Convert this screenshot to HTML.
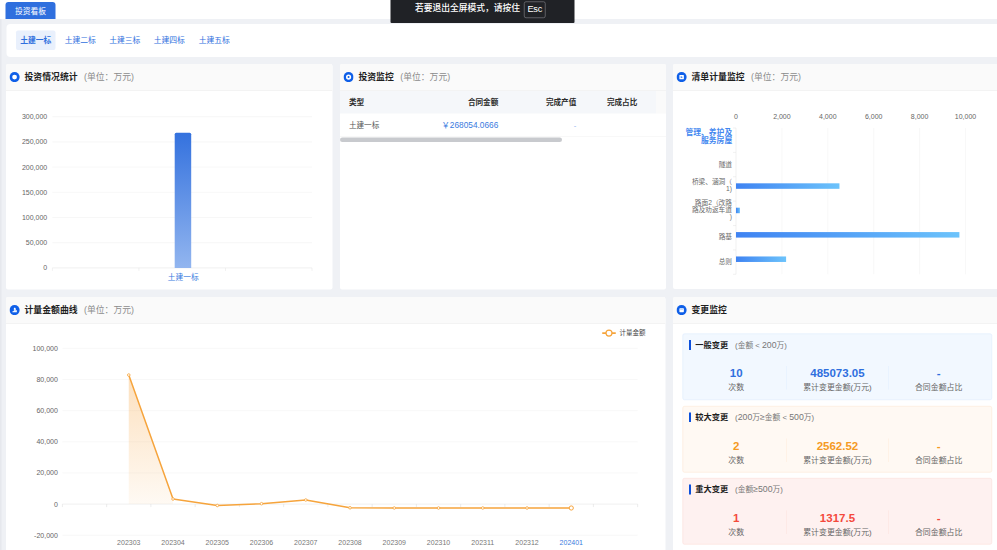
<!DOCTYPE html>
<html lang="zh-CN"><head><meta charset="utf-8"><title>投资看板</title>
<style>
html,body{margin:0;padding:0;width:997px;height:550px;overflow:hidden;background:#eff1f5;}
#root{position:absolute;left:0;top:0;width:1994px;height:1100px;transform:scale(.5);transform-origin:0 0;
 font-family:"Liberation Sans","Noto Sans CJK SC",sans-serif;color:#222;background:#eff1f5;overflow:hidden;}
#root *{box-sizing:border-box;}
.abs{position:absolute;}
.card{position:absolute;background:#fff;border-radius:4px;overflow:hidden;}
.chead{position:absolute;left:0;top:0;right:0;height:54px;background:#fafafa;border-bottom:1px solid #ececec;}
.ctitle{position:absolute;left:37px;top:0;height:54px;line-height:53.4px;font-size:17.7px;font-weight:700;color:#1f1f1f;white-space:nowrap;}
.ctitle span{font-weight:400;color:#8c8c8c;font-size:17.6px;margin-left:13px;}
.ico{position:absolute;left:7.4px;top:15.8px;width:20.3px;height:20.3px;}
.tab{position:absolute;top:13.5px;height:39px;width:79px;line-height:39px;text-align:center;font-size:15.6px;color:#2f6fde;border-radius:4px;white-space:nowrap;}
.tab.on{background:#e9f0fc;font-weight:700;}
svg text{font-family:"Liberation Sans","Noto Sans CJK SC",sans-serif;}
.box{position:absolute;left:19px;width:619px;height:133px;border-radius:4px;border:1px solid;}
.box .bar{position:absolute;left:12px;top:12px;width:4px;height:19.5px;background:#0c50dc;}
.box .bt{position:absolute;left:24.6px;top:8px;height:27px;line-height:27px;font-size:16.4px;font-weight:700;color:#1f1f1f;white-space:nowrap;}
.box .bt>span{font-weight:400;color:#777;font-size:15.5px;margin-left:14px;}
.n{font-size:1.13em;}
.col{position:absolute;top:63px;width:203px;text-align:center;}
.col b{display:block;font-size:23px;line-height:30px;font-weight:700;}
.col i{display:block;font-style:normal;font-size:15.8px;line-height:28px;color:#666;white-space:nowrap;}
.vd{position:absolute;top:64px;width:1px;height:47px;opacity:.7;}
</style></head><body><div id="root">

<div class="abs" style="left:0;top:0;width:1994px;height:38px;background:#fff"></div>
<div class="abs" style="left:11px;top:4px;width:100px;height:34px;background:#2f6fde;border-radius:6px 6px 0 0;color:#fff;font-size:15.6px;line-height:35px;text-align:center;white-space:nowrap;">投资看板</div>
<div class="abs" style="left:781px;top:-6px;width:368px;height:51.6px;background:#202226;border-radius:2px;"></div>
<div class="abs" style="left:830px;top:0;height:41px;line-height:32px;font-size:17.5px;font-weight:500;color:#fff;white-space:nowrap;">若要退出全屏模式，请按住</div>
<div class="abs" style="left:1048px;top:3px;width:43px;height:33px;border:1.5px solid #9a9ba0;border-radius:4px;color:#fff;font-size:18.4px;line-height:27px;letter-spacing:-0.4px;text-align:center;">Esc</div>
<div class="abs" style="left:13px;top:47.5px;width:1990px;height:66px;background:#fff;border-radius:8px;">
<div class="tab on" style="left:19px">土建一标</div>
<div class="tab" style="left:108px">土建二标</div>
<div class="tab" style="left:197px">土建三标</div>
<div class="tab" style="left:286px">土建四标</div>
<div class="tab" style="left:376px">土建五标</div>
</div>
<div class="card" style="left:12px;top:127.8px;width:652.6px;height:451.6px">
<div class="chead"><svg class="ico" viewBox="0 0 20 20"><circle cx="10" cy="10" r="10" fill="#0f5fe8"/><circle cx="10" cy="10" r="4.7" fill="#fff"/></svg><div class="ctitle">投资情况统计<span>(单位：万元)</span></div></div>
<svg class="abs" style="left:0;top:55px" width="654" height="398" viewBox="0 0 654 398"><defs><linearGradient id="g1" x1="0" y1="0" x2="0" y2="1"><stop offset="0" stop-color="#3472de"/><stop offset="1" stop-color="#92b5ef"/></linearGradient></defs><line x1="92.8" y1="352.8" x2="612" y2="352.8" stroke="#e2e2e2" stroke-width="1"/><text x="82.4" y="357.8" text-anchor="end" font-size="14" fill="#666">0</text><line x1="92.8" y1="302.4" x2="612" y2="302.4" stroke="#efefef" stroke-width="1"/><text x="82.4" y="307.4" text-anchor="end" font-size="14" fill="#666">50,000</text><line x1="92.8" y1="252" x2="612" y2="252" stroke="#efefef" stroke-width="1"/><text x="82.4" y="257" text-anchor="end" font-size="14" fill="#666">100,000</text><line x1="92.8" y1="201.6" x2="612" y2="201.6" stroke="#efefef" stroke-width="1"/><text x="82.4" y="206.6" text-anchor="end" font-size="14" fill="#666">150,000</text><line x1="92.8" y1="151.2" x2="612" y2="151.2" stroke="#efefef" stroke-width="1"/><text x="82.4" y="156.2" text-anchor="end" font-size="14" fill="#666">200,000</text><line x1="92.8" y1="100.8" x2="612" y2="100.8" stroke="#efefef" stroke-width="1"/><text x="82.4" y="105.8" text-anchor="end" font-size="14" fill="#666">250,000</text><line x1="92.8" y1="50.4" x2="612" y2="50.4" stroke="#efefef" stroke-width="1"/><text x="82.4" y="55.4" text-anchor="end" font-size="14" fill="#666">300,000</text><line x1="92.8" y1="352.8" x2="92.8" y2="358.8" stroke="#e2e2e2" stroke-width="1"/><line x1="265.8" y1="352.8" x2="265.8" y2="358.8" stroke="#e2e2e2" stroke-width="1"/><line x1="439" y1="352.8" x2="439" y2="358.8" stroke="#e2e2e2" stroke-width="1"/><line x1="612" y1="352.8" x2="612" y2="358.8" stroke="#e2e2e2" stroke-width="1"/><path d="M337.4 352.802 v-267.2 q0 -3 3 -3 h27 q3 0 3 3 v267.2 z" fill="url(#g1)"/><text x="354.4" y="376.2" text-anchor="middle" font-size="15.4" fill="#3a7be0">土建一标</text></svg>
</div>
<div class="card" style="left:679.8px;top:127.8px;width:652.6px;height:451.6px">
<div class="chead"><svg class="ico" viewBox="0 0 20 20"><circle cx="10" cy="10" r="10" fill="#0f5fe8"/><circle cx="10" cy="10" r="5.1" fill="#fff"/><circle cx="10" cy="10" r="2" fill="#0f5fe8"/></svg><div class="ctitle">投资监控<span>(单位：万元)</span></div></div>
<div class="abs" style="left:0;top:54px;width:632px;height:45.4px;background:#f5f7fa;"></div><div class="abs" style="left:632px;top:54px;width:22px;height:45.4px;background:#fafafa;"></div><div style="position:absolute;top:54px;height:45px;line-height:45px;font-size:15.2px;font-weight:700;color:#2b2b2b;white-space:nowrap;left:18px">类型</div><div style="position:absolute;top:54px;height:45px;line-height:45px;font-size:15.2px;font-weight:700;color:#2b2b2b;white-space:nowrap;right:335.8px">合同金额</div><div style="position:absolute;top:54px;height:45px;line-height:45px;font-size:15.2px;font-weight:700;color:#2b2b2b;white-space:nowrap;right:179.8px">完成产值</div><div style="position:absolute;top:54px;height:45px;line-height:45px;font-size:15.2px;font-weight:700;color:#2b2b2b;white-space:nowrap;right:57.8px">完成占比</div><div style="position:absolute;top:100px;height:46px;line-height:46px;font-size:15.2px;white-space:nowrap;left:18px;color:#555">土建一标</div><div style="position:absolute;top:100px;height:46px;line-height:46px;font-size:15.2px;white-space:nowrap;right:335.8px;color:#3a7be0;font-size:16.6px">￥268054.0666</div><div style="position:absolute;top:100px;height:46px;line-height:46px;font-size:15.2px;white-space:nowrap;right:179.8px;color:#8fb3ee">-</div><div class="abs" style="left:0;top:145px;width:654px;height:1px;background:#f1f1f1"></div><div class="abs" style="left:0;top:147px;width:444px;height:9px;background:#c8cace;border-radius:5px"></div>
</div>
<div class="card" style="left:1346px;top:127.8px;width:652.6px;height:450.4px">
<div class="chead"><svg class="ico" viewBox="0 0 20 20"><circle cx="10" cy="10" r="10" fill="#0f5fe8"/><rect x="5.7" y="5.9" width="8.8" height="8.4" rx="1.2" fill="#fff"/><path d="M8.2 8 L11.6 9.4 L11.6 11.6 L8.2 11.6 Z" fill="#4f8df0"/></svg><div class="ctitle">清单计量监控<span>(单位：万元)</span></div></div>
<svg class="abs" style="left:0;top:55px" width="654" height="398" viewBox="0 0 654 398"><defs><linearGradient id="g3" x1="0" y1="0" x2="1" y2="0"><stop offset="0" stop-color="#3f83f2"/><stop offset="1" stop-color="#6cc3fb"/></linearGradient></defs><line x1="126" y1="73" x2="126" y2="365.6" stroke="#e2e2e2" stroke-width="1"/><text x="126" y="54" text-anchor="middle" font-size="14" fill="#666">0</text><line x1="217.8" y1="73" x2="217.8" y2="365.6" stroke="#f0f0f0" stroke-width="1"/><text x="217.8" y="54" text-anchor="middle" font-size="14" fill="#666">2,000</text><line x1="309.6" y1="73" x2="309.6" y2="365.6" stroke="#f0f0f0" stroke-width="1"/><text x="309.6" y="54" text-anchor="middle" font-size="14" fill="#666">4,000</text><line x1="401.4" y1="73" x2="401.4" y2="365.6" stroke="#f0f0f0" stroke-width="1"/><text x="401.4" y="54" text-anchor="middle" font-size="14" fill="#666">6,000</text><line x1="493.2" y1="73" x2="493.2" y2="365.6" stroke="#f0f0f0" stroke-width="1"/><text x="493.2" y="54" text-anchor="middle" font-size="14" fill="#666">8,000</text><line x1="585" y1="73" x2="585" y2="365.6" stroke="#f0f0f0" stroke-width="1"/><text x="585" y="54" text-anchor="middle" font-size="14" fill="#666">10,000</text><line x1="120" y1="73" x2="126" y2="73" stroke="#e2e2e2" stroke-width="1"/><line x1="120" y1="121.767" x2="126" y2="121.767" stroke="#e2e2e2" stroke-width="1"/><line x1="120" y1="170.533" x2="126" y2="170.533" stroke="#e2e2e2" stroke-width="1"/><line x1="120" y1="219.3" x2="126" y2="219.3" stroke="#e2e2e2" stroke-width="1"/><line x1="120" y1="268.067" x2="126" y2="268.067" stroke="#e2e2e2" stroke-width="1"/><line x1="120" y1="316.833" x2="126" y2="316.833" stroke="#e2e2e2" stroke-width="1"/><line x1="120" y1="365.6" x2="126" y2="365.6" stroke="#e2e2e2" stroke-width="1"/><rect x="126" y="183.633" width="206.9" height="11" fill="url(#g3)"/><rect x="126" y="232.4" width="7.8" height="11" fill="url(#g3)"/><rect x="126" y="281.167" width="446.8" height="11" fill="url(#g3)"/><rect x="126" y="329.933" width="100.2" height="11" fill="url(#g3)"/><text x="118.4" y="86.3" text-anchor="end" font-size="15.6" font-weight="700" fill="#4287f0">管理、养护及</text><text x="118.4" y="102.3" text-anchor="end" font-size="15.6" font-weight="700" fill="#4287f0">服务房屋</text><text x="118" y="150.2" text-anchor="end" font-size="13.4" fill="#6a6a6a">隧道</text><text x="118" y="184.8" text-anchor="end" font-size="13.4" fill="#6a6a6a">桥梁、涵洞（</text><text x="118" y="198.8" text-anchor="end" font-size="13.4" fill="#6a6a6a">1)</text><text x="118" y="226.8" text-anchor="end" font-size="13.4" fill="#6a6a6a">路面2（改路</text><text x="118" y="240.8" text-anchor="end" font-size="13.4" fill="#6a6a6a">路及劝返车道</text><text x="118" y="254.8" text-anchor="end" font-size="13.4" fill="#6a6a6a">)</text><text x="118" y="295.6" text-anchor="end" font-size="13.4" fill="#6a6a6a">路基</text><text x="118" y="344.2" text-anchor="end" font-size="13.4" fill="#6a6a6a">总则</text></svg>
</div>
<div class="card" style="left:12px;top:593.8px;width:1318.6px;height:520px">
<div class="chead"><svg class="ico" viewBox="0 0 20 20"><circle cx="10" cy="10" r="10" fill="#0f5fe8"/><path d="M5.6 14.4 L5.6 12.6 L8.6 11.8 L8.6 6.6 Q8.6 5.6 9.6 5.6 L11 5.6 Q12 5.6 12 6.6 L12.4 9.2 L14.4 11 L14.4 14.4 Z" fill="#fff"/><path d="M10.6 7.6 L11.5 12.2 L10.5 12.2 Z" fill="#0f5fe8"/></svg><div class="ctitle">计量金额曲线<span>(单位：万元)</span></div></div>
<svg class="abs" style="left:0;top:55px" width="1318.6" height="460" viewBox="0 0 1318.6 460"><defs><linearGradient id="g4" x1="0" y1="0" x2="0" y2="1"><stop offset="0" stop-color="#f7a440" stop-opacity=".34"/><stop offset="1" stop-color="#f7a440" stop-opacity=".06"/></linearGradient></defs><line x1="112.8" y1="421.5" x2="1263.3" y2="421.5" stroke="#f0f0f0" stroke-width="1" /><text x="103.6" y="426.5" text-anchor="end" font-size="14" fill="#666">-20,000</text><line x1="112.8" y1="359.2" x2="1263.3" y2="359.2" stroke="#e0e0e0" stroke-width="1" /><text x="103.6" y="364.2" text-anchor="end" font-size="14" fill="#666">0</text><line x1="112.8" y1="296.9" x2="1263.3" y2="296.9" stroke="#f0f0f0" stroke-width="1" /><text x="103.6" y="301.9" text-anchor="end" font-size="14" fill="#666">20,000</text><line x1="112.8" y1="234.6" x2="1263.3" y2="234.6" stroke="#f0f0f0" stroke-width="1" /><text x="103.6" y="239.6" text-anchor="end" font-size="14" fill="#666">40,000</text><line x1="112.8" y1="172.3" x2="1263.3" y2="172.3" stroke="#f0f0f0" stroke-width="1" /><text x="103.6" y="177.3" text-anchor="end" font-size="14" fill="#666">60,000</text><line x1="112.8" y1="110" x2="1263.3" y2="110" stroke="#f0f0f0" stroke-width="1" /><text x="103.6" y="115" text-anchor="end" font-size="14" fill="#666">80,000</text><line x1="112.8" y1="47.7" x2="1263.3" y2="47.7" stroke="#f0f0f0" stroke-width="1" /><text x="103.6" y="52.7" text-anchor="end" font-size="14" fill="#666">100,000</text><line x1="112.8" y1="359.2" x2="112.8" y2="365.2" stroke="#d8d8d8" stroke-width="1"/><line x1="201.3" y1="359.2" x2="201.3" y2="365.2" stroke="#d8d8d8" stroke-width="1"/><line x1="289.8" y1="359.2" x2="289.8" y2="365.2" stroke="#d8d8d8" stroke-width="1"/><line x1="378.3" y1="359.2" x2="378.3" y2="365.2" stroke="#d8d8d8" stroke-width="1"/><line x1="466.8" y1="359.2" x2="466.8" y2="365.2" stroke="#d8d8d8" stroke-width="1"/><line x1="555.3" y1="359.2" x2="555.3" y2="365.2" stroke="#d8d8d8" stroke-width="1"/><line x1="643.8" y1="359.2" x2="643.8" y2="365.2" stroke="#d8d8d8" stroke-width="1"/><line x1="732.3" y1="359.2" x2="732.3" y2="365.2" stroke="#d8d8d8" stroke-width="1"/><line x1="820.8" y1="359.2" x2="820.8" y2="365.2" stroke="#d8d8d8" stroke-width="1"/><line x1="909.3" y1="359.2" x2="909.3" y2="365.2" stroke="#d8d8d8" stroke-width="1"/><line x1="997.8" y1="359.2" x2="997.8" y2="365.2" stroke="#d8d8d8" stroke-width="1"/><line x1="1086.3" y1="359.2" x2="1086.3" y2="365.2" stroke="#d8d8d8" stroke-width="1"/><line x1="1174.8" y1="359.2" x2="1174.8" y2="365.2" stroke="#d8d8d8" stroke-width="1"/><line x1="1263.3" y1="359.2" x2="1263.3" y2="365.2" stroke="#d8d8d8" stroke-width="1"/><text x="245.55" y="440.8" text-anchor="middle" font-size="14" fill="#777">202303</text><text x="334.05" y="440.8" text-anchor="middle" font-size="14" fill="#777">202304</text><text x="422.55" y="440.8" text-anchor="middle" font-size="14" fill="#777">202305</text><text x="511.05" y="440.8" text-anchor="middle" font-size="14" fill="#777">202306</text><text x="599.55" y="440.8" text-anchor="middle" font-size="14" fill="#777">202307</text><text x="688.05" y="440.8" text-anchor="middle" font-size="14" fill="#777">202308</text><text x="776.55" y="440.8" text-anchor="middle" font-size="14" fill="#777">202309</text><text x="865.05" y="440.8" text-anchor="middle" font-size="14" fill="#777">202310</text><text x="953.55" y="440.8" text-anchor="middle" font-size="14" fill="#777">202311</text><text x="1042.05" y="440.8" text-anchor="middle" font-size="14" fill="#777">202312</text><text x="1130.55" y="440.8" text-anchor="middle" font-size="14" fill="#3a7be0">202401</text><path d="M245.55 101 L334.05 349 L334.05 359.2 L245.55 359.2 Z" fill="url(#g4)"/><polyline fill="none" stroke="#f6a43c" stroke-width="3" stroke-linejoin="round" points="245.55,101 334.05,349 422.55,362 511.05,358.4 599.55,351 688.05,366.6 776.55,367 865.05,367 953.55,367 1042.05,367 1130.55,367"/><circle cx="245.55" cy="101" r="2.6" fill="#fff" stroke="#f6a43c" stroke-width="1.6"/><circle cx="334.05" cy="349" r="2.6" fill="#fff" stroke="#f6a43c" stroke-width="1.6"/><circle cx="422.55" cy="362" r="2.6" fill="#fff" stroke="#f6a43c" stroke-width="1.6"/><circle cx="511.05" cy="358.4" r="2.6" fill="#fff" stroke="#f6a43c" stroke-width="1.6"/><circle cx="599.55" cy="351" r="2.6" fill="#fff" stroke="#f6a43c" stroke-width="1.6"/><circle cx="688.05" cy="366.6" r="2.6" fill="#fff" stroke="#f6a43c" stroke-width="1.6"/><circle cx="776.55" cy="367" r="2.6" fill="#fff" stroke="#f6a43c" stroke-width="1.6"/><circle cx="865.05" cy="367" r="2.6" fill="#fff" stroke="#f6a43c" stroke-width="1.6"/><circle cx="953.55" cy="367" r="2.6" fill="#fff" stroke="#f6a43c" stroke-width="1.6"/><circle cx="1042.05" cy="367" r="2.6" fill="#fff" stroke="#f6a43c" stroke-width="1.6"/><circle cx="1130.55" cy="367" r="4.2" fill="#fff" stroke="#f6a43c" stroke-width="2"/><line x1="1192.5" y1="17.2" x2="1219.5" y2="17.2" stroke="#f6a43c" stroke-width="3.4"/><circle cx="1206" cy="17.2" r="6" fill="#fff" stroke="#f6a43c" stroke-width="2.4"/><text x="1227.2" y="22" font-size="13" fill="#444">计量金额</text></svg>
</div>
<div class="card" style="left:1346px;top:593.8px;width:652.6px;height:520px">
<div class="chead"><svg class="ico" viewBox="0 0 20 20"><circle cx="10" cy="10" r="10" fill="#0f5fe8"/><rect x="5.7" y="6.2" width="8.8" height="8" rx="1.2" fill="#fff"/><rect x="7.2" y="7.4" width="5.8" height="2.6" fill="#c6d9fa"/></svg><div class="ctitle">变更监控</div></div>
<div class="box" style="top:73.4px;background:#f2f8ff;border-color:#d9e9fd"><div class="bar"></div><div class="bt">一般变更<span>(金额 &lt; <span class="n">200</span>万)</span></div><div class="col" style="left:5px"><b style="color:#2f6fde">10</b><i>次数</i></div><div class="col" style="left:207.4px"><b style="color:#2f6fde">485073.05</b><i>累计变更金额(万元)</i></div><div class="col" style="left:409.8px"><b style="color:#2f6fde">-</b><i>合同金额占比</i></div><div class="vd" style="left:205.6px;background:#d9e9fd"></div><div class="vd" style="left:410px;background:#d9e9fd"></div></div><div class="box" style="top:218px;background:#fff9f3;border-color:#fde5ce"><div class="bar"></div><div class="bt">较大变更<span>(<span class="n">200</span>万<span class="n">≥</span>金额 &lt; <span class="n">500</span>万)</span></div><div class="col" style="left:5px"><b style="color:#f59a23">2</b><i>次数</i></div><div class="col" style="left:207.4px"><b style="color:#f59a23">2562.52</b><i>累计变更金额(万元)</i></div><div class="col" style="left:409.8px"><b style="color:#f59a23">-</b><i>合同金额占比</i></div><div class="vd" style="left:205.6px;background:#fde5ce"></div><div class="vd" style="left:410px;background:#fde5ce"></div></div><div class="box" style="top:362.4px;background:#fef1f0;border-color:#fbd8d4"><div class="bar"></div><div class="bt">重大变更<span>(金额<span class="n">≥</span><span class="n">500</span>万)</span></div><div class="col" style="left:5px"><b style="color:#f4493c">1</b><i>次数</i></div><div class="col" style="left:207.4px"><b style="color:#f4493c">1317.5</b><i>累计变更金额(万元)</i></div><div class="col" style="left:409.8px"><b style="color:#f4493c">-</b><i>合同金额占比</i></div><div class="vd" style="left:205.6px;background:#fbd8d4"></div><div class="vd" style="left:410px;background:#fbd8d4"></div></div>
</div>
<div class="abs" style="left:0;top:38px;width:3px;height:1100px;background:#e6e8ed"></div>
</div></body></html>
